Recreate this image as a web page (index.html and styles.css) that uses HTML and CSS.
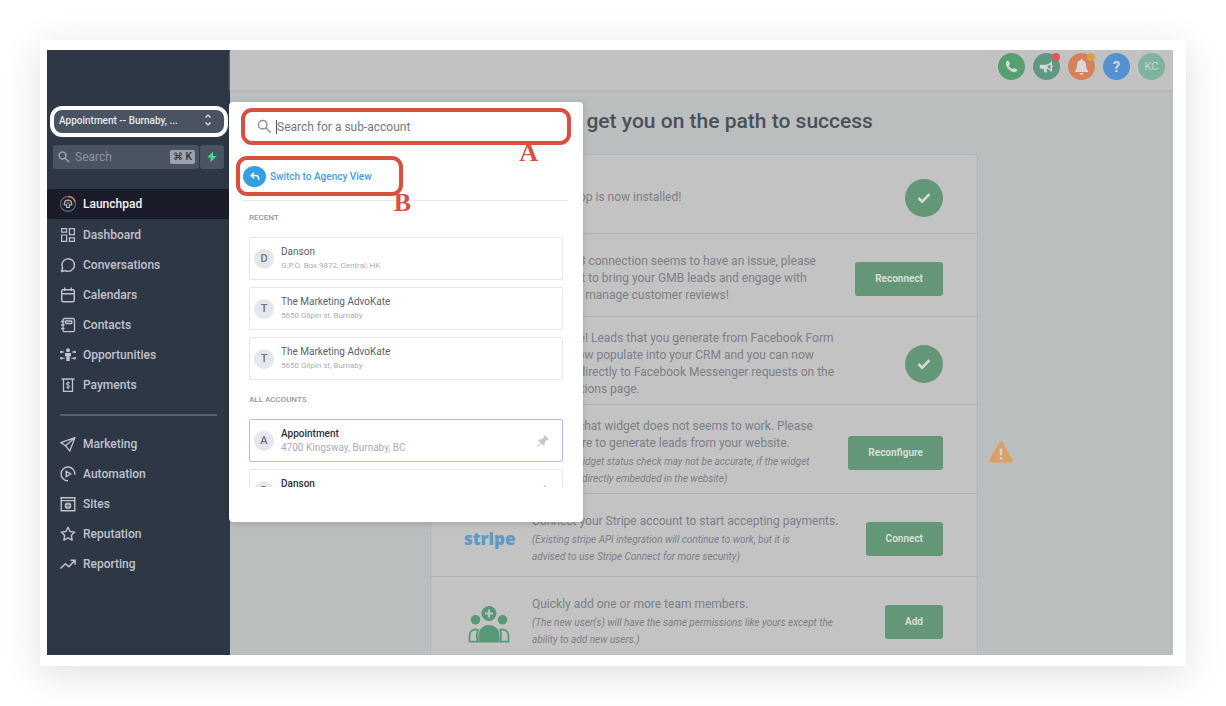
FILE: index.html
```html
<!DOCTYPE html>
<html lang="en">
<head>
  <meta charset="UTF-8" />
  <meta name="viewport" content="width=device-width, initial-scale=1" />
  <title>Launchpad</title>
  <link rel="stylesheet" href="styles.css">
</head>
<body>

<div class="frame">
  <div class="app">

    <aside class="sidebar">
      <button class="account-select" type="button">
        <span>Appointment -- Burnaby, ...</span>
        <svg width="8" height="14" viewBox="0 0 8 14" fill="none" stroke="currentColor" stroke-width="1.2"><path d="M1.5 4.5 4 2l2.500 2.500M1.500 9.500 4 12l2.500-2.500"/></svg>
      </button>

      <div class="quick-search">
        <label class="quick-field">
          <svg width="12" height="12" viewBox="0 0 12 12" fill="none" stroke="currentColor" stroke-width="1.500"><circle cx="4.500" cy="4.500" r="3.400"/><path d="m7.200 7.200 4 4"/></svg>
          <input type="text" placeholder="Search" aria-label="Search">
          <kbd>⌘ K</kbd>
        </label>
        <button class="zap" type="button" aria-label="Quick actions">
          <svg width="12" height="12" viewBox="0 0 12 12" fill="#3ddc97"><path d="M7 .8 1.200 6.600h3.500L4.300 11.200 10.800 5H7.200z"/></svg>
        </button>
      </div>

      <nav>
        <ul class="nav-list">
          <li><a class="active" href="#">
            <svg width="18" height="18" viewBox="0 0 18 18" fill="none"><circle cx="9" cy="9" r="7.500" stroke="#5b6070" stroke-width="1.300"/><path d="M9 1.500A7.500 7.500 0 0 1 16.200 7" stroke="#e2793f" stroke-width="1.500"/><path d="M7.600 9.800H5.200C5.200 6.800 6.800 5.200 9 5.200s3.800 1.600 3.800 4.600h-2.400v2.700H7.600z" stroke="#b9bdc8" stroke-width="1.200"/><path d="M7.500 8h3" stroke="#b9bdc8"/></svg>
            Launchpad</a></li>
          <li><a href="#">
            <svg width="18" height="18" viewBox="0 0 18 18" fill="none" stroke="currentColor" stroke-width="1.200"><path d="M2.600 2.600h5v3.600h-5zM10.400 2.600h5v6h-5zM2.600 9h5v6.400h-5zM10.400 11.800h5v3.600h-5z"/></svg>
            Dashboard</a></li>
          <li><a href="#">
            <svg width="18" height="18" viewBox="0 0 18 18" fill="none" stroke="currentColor" stroke-width="1.400"><path d="M2.500 15.500 3.600 12A6.300 6.300 0 1 1 6.200 14.600z" stroke-linejoin="round"/></svg>
            Conversations</a></li>
          <li><a href="#">
            <svg width="18" height="18" viewBox="0 0 18 18" fill="none" stroke="currentColor" stroke-width="1.400"><rect x="2.700" y="3.700" width="12.600" height="12" rx="1.500"/><path d="M2.700 7.700h12.600M5.700 1.500v3.500M12.300 1.500v3.500"/></svg>
            Calendars</a></li>
          <li><a href="#">
            <svg width="18" height="18" viewBox="0 0 18 18" fill="none" stroke="currentColor" stroke-width="1.300"><rect x="4" y="2.500" width="11.500" height="13.200" rx="1.500"/><rect x="6.600" y="5" width="6.300" height="2.500" rx=".5"/><path d="M2 5.500h3.500M2 9h3.500M2 12.500h3.500"/></svg>
            Contacts</a></li>
          <li><a href="#">
            <svg width="18" height="18" viewBox="0 0 18 18" fill="currentColor" stroke="none"><circle cx="9" cy="4.300" r="2"/><path d="M6 7h6v3.200h-1.300V15H7.300v-4.800H6z"/><circle cx="2.300" cy="6" r="1.300"/><circle cx="15.700" cy="6" r="1.300"/><circle cx="2.300" cy="12.200" r="1.300"/><circle cx="15.700" cy="12.200" r="1.300"/><path d="M3 5.500h2.200v1.100H3zM12.800 5.500H15v1.100h-2.200zM3 11.700h2.800v1.100H3zM12.200 11.700H15v1.100h-2.800z"/></svg>
            Opportunities</a></li>
          <li><a href="#">
            <svg width="18" height="18" viewBox="0 0 18 18" fill="none" stroke="currentColor" stroke-width="1.300"><path d="M2.500 3h13M4.500 3v12.300h9V3"/><path d="M10.800 7.200C10.500 6.500 7.400 6.200 7.400 7.900S10.700 8.800 10.700 10.600 7.600 12 7.200 11M9 5.500v7.500" stroke-width="1"/></svg>
            Payments</a></li>
        </ul>
        <hr>
        <ul class="nav-list">
          <li><a href="#">
            <svg width="18" height="18" viewBox="0 0 18 18" fill="none" stroke="currentColor" stroke-width="1.300" stroke-linejoin="round"><path d="M16 2.600 1.800 7.600l4.800 3.200L10.800 16zM16 2.600 6.600 10.800"/></svg>
            Marketing</a></li>
          <li><a href="#">
            <svg width="18" height="18" viewBox="0 0 18 18" fill="none" stroke="currentColor" stroke-width="1.400"><path d="M9 15.800A6.900 6.900 0 1 1 15.800 9.800M7.200 6.300v5.200L11.600 9z"/></svg>
            Automation</a></li>
          <li><a href="#">
            <svg width="18" height="18" viewBox="0 0 18 18" fill="none" stroke="currentColor" stroke-width="1.400"><path d="M2.200 2.700h13.600v13H2.200zM2.200 5.600h13.600"/><circle cx="9" cy="10.700" r="2.600" fill="currentColor"/><path d="M6.500 10.700h5M9 8.300v5" stroke="#2d3746" stroke-width=".6"/></svg>
            Sites</a></li>
          <li><a href="#">
            <svg width="18" height="18" viewBox="0 0 18 18" fill="none" stroke="currentColor" stroke-width="1.400" stroke-linejoin="round"><path d="m9 2.200 2 4.300 4.700.6-3.400 3.300.8 4.800L9 12.900l-4.100 2.300.8-4.800L2.300 7.100 7 6.500z"/></svg>
            Reputation</a></li>
          <li><a href="#">
            <svg width="18" height="18" viewBox="0 0 18 18" fill="none" stroke="currentColor" stroke-width="1.500"><path d="m1.500 13.500 4.800-4.800 3.500 3L15.800 5.500M11.500 5.200h4.600v4.500"/></svg>
            Reporting</a></li>
        </ul>
      </nav>
    </aside>

    <main class="main">
      <header class="topbar">
        <button class="round phone" type="button" aria-label="Phone">
          <svg width="13" height="13" viewBox="0 0 13 13" fill="currentColor"><path d="M3.300.8 5.100 4 3.900 5.400c.7 1.600 2 2.900 3.700 3.700L9 7.900l3.200 1.800c-.2 1.400-1 2.500-2.400 2.500C5.500 12.200.8 7.500.8 3.200.8 1.800 1.900 1 3.300.8z"/></svg>
        </button>
        <button class="round news" type="button" aria-label="News">
          <svg width="15" height="14" viewBox="0 0 15 14" fill="currentColor"><path fill-rule="evenodd" d="M1.500 4.700h5.300C9.500 4.500 11.300 3 12.300 1.500h.7v4c1 .3 1 2 0 2.300v4h-.7C11.300 10.300 9.500 9 7.300 8.700l.9 3.800H5.400L4.500 8.700h-3C.4 8.700.4 4.700 1.500 4.700zM8.700 5.800v2c1.100.2 2 .7 2.800 1.400V4.400c-.8.700-1.700 1.200-2.800 1.400z"/></svg>
          <span class="dot red"></span>
        </button>
        <button class="round bell" type="button" aria-label="Notifications">
          <svg width="15" height="16" viewBox="0 0 15 16" fill="currentColor"><path d="M7.500 0c.7 0 1 .5 1 1.200 2.200.5 3.500 2.200 3.500 4.600 0 3.200.7 4.700 2 6 .4.500.2 1.200-.5 1.200h-12c-.7 0-.9-.7-.5-1.200 1.300-1.300 2-2.800 2-6 0-2.400 1.300-4.100 3.500-4.600C6.500.5 6.800 0 7.500 0zM5.500 14h4c-.2 2.400-3.800 2.400-4 0z"/></svg>
          <span class="dot amber"></span>
        </button>
        <button class="round help" type="button" aria-label="Help">?</button>
        <button class="round user" type="button">KC</button>
      </header>

      <h1>Let's get you on the path to success</h1>

      <section class="steps">
        <article class="step first">
          <p>Mobile App is now installed!</p>
          <span class="done"><svg width="14" height="12" viewBox="0 0 14 12" fill="none" stroke="currentColor" stroke-width="2.500"><path d="m1.500 6 3.700 3.700 7.300-7.500"/></svg></span>
        </article>

        <article class="step">
          <p>Your GMB connection seems to have an issue, please<br>reconnect to bring your GMB leads and engage with<br>them and manage customer reviews!</p>
          <button class="btn" type="button">Reconnect</button>
        </article>

        <article class="step">
          <p>Awesome! Leads that you generate from Facebook Form<br>should now populate into your CRM and you can now<br>respond directly to Facebook Messenger requests on the<br>conversations page.</p>
          <span class="done"><svg width="14" height="12" viewBox="0 0 14 12" fill="none" stroke="currentColor" stroke-width="2.500"><path d="m1.500 6 3.700 3.700 7.300-7.500"/></svg></span>
        </article>

        <article class="step">
          <p>Website chat widget does not seems to work. Please<br>reconfigure to generate leads from your website.
            <em>(The chat widget status check may not be accurate, if the widget<br>code is not directly embedded in the website)</em></p>
          <button class="btn" type="button">Reconfigure</button>
          <svg class="warning" width="24" height="22" viewBox="0 0 24 22"><path d="M10.300 1.300c.8-1.300 2.600-1.300 3.400 0l9.800 17.300c.7 1.300-.2 2.900-1.700 2.900H2.200C.7 21.500-.2 19.900.5 18.600z" fill="#dba06a"/><path d="M12 7.500v7" stroke="#d6d0c8" stroke-width="2.400"/><circle cx="12" cy="17.300" r="1.400" fill="#d6d0c8"/></svg>
        </article>

        <article class="step">
          <span class="stripe">stripe</span>
          <p>Connect your Stripe account to start accepting payments.
            <em>(Existing stripe API integration will continue to work, but it is<br>advised to use Stripe Connect for more security)</em></p>
          <button class="btn" type="button">Connect</button>
        </article>

        <article class="step">
          <svg class="team" width="42" height="38" viewBox="0 0 42 38" fill="#579877"><circle cx="21" cy="8.500" r="7.500"/><path d="M21 4.500v8M17 8.500h8" stroke="#c3c3c3" stroke-width="2"/><circle cx="7.500" cy="14.800" r="4.800"/><circle cx="34.500" cy="14.800" r="4.800"/><path d="M10.500 37.500V31C10.500 24 15 20 21 20s10.500 4 10.500 11v6.500z"/><path d="M9.500 36.600H1.500V31c0-4 2.500-6.500 6-6.500 1 0 1.700.2 2.400.5C8.500 28.500 8.500 32 9.500 36.600zM32.500 36.600h8V31c0-4-2.500-6.500-6-6.500-1 0-1.700.2-2.400.5 1.400 3.500 1.400 7 .4 11.600z" fill="none" stroke="#579877" stroke-width="1.800"/></svg>
          <p>Quickly add one or more team members.
            <em>(The new user(s) will have the same permissions like yours except the<br>ability to add new users.)</em></p>
          <button class="btn" type="button">Add</button>
        </article>
      </section>
    </main>

    <!-- sub-account switcher -->
    <div class="switcher">
      <label class="account-search">
        <svg width="15" height="15" viewBox="0 0 15 15" fill="none" stroke="currentColor" stroke-width="1.500"><circle cx="5.700" cy="5.700" r="4.300"/><path d="m9 9 4.800 4.800"/></svg>
        <span class="caret"></span>
        <input type="text" placeholder="Search for a sub-account" aria-label="Search for a sub-account">
        <span class="mark">A</span>
      </label>

      <button class="agency" type="button">
        <span class="agency-icon"><svg width="10" height="9" viewBox="0 0 10 9" fill="none" stroke="currentColor" stroke-width="1.400"><path d="M4 .8 1.200 3.500 4 6.200M1.200 3.500H6c2 0 2.700 1.200 2.700 4.500"/></svg></span>
        Switch to Agency View
        <span class="mark">B</span>
      </button>

      <div class="accounts">
        <h2>RECENT</h2>
        <ul>
          <li class="account"><span class="avatar">D</span><div><h3>Danson</h3><p>G.P.O. Box 9872, Central, HK</p></div></li>
          <li class="account"><span class="avatar">T</span><div><h3>The Marketing AdvoKate</h3><p>5650 Gilpin st, Burnaby</p></div></li>
          <li class="account"><span class="avatar">T</span><div><h3>The Marketing AdvoKate</h3><p>5650 Gilpin st, Burnaby</p></div></li>
        </ul>
        <h2 class="all">ALL ACCOUNTS</h2>
        <ul>
          <li class="account full current"><span class="avatar">A</span><div><h3>Appointment</h3><p>4700 Kingsway, Burnaby, BC</p></div>
            <svg class="pin" width="14" height="14" viewBox="0 0 14 14" fill="currentColor"><path d="m8.500 1 4.500 4.500-1.200.8-1-.2-2 2.200-.2 2.700-1.100.8-2.200-2.300L1 13.200l-.4-.4L4.400 8.700 2.200 6.500 3 5.400l2.700-.2 2.200-2-.2-1z"/></svg></li>
          <li class="account full"><span class="avatar">D</span><div><h3>Danson</h3><p>G.P.O. Box 9872, Central, HK</p></div>
            <svg class="pin" width="14" height="14" viewBox="0 0 14 14" fill="currentColor"><path d="m8.500 1 4.500 4.500-1.200.8-1-.2-2 2.200-.2 2.700-1.100.8-2.200-2.300L1 13.200l-.4-.4L4.400 8.700 2.200 6.500 3 5.400l2.700-.2 2.200-2-.2-1z"/></svg></li>
        </ul>
      </div>
    </div>

  </div>
</div>

</body>
</html>
```
FILE: styles.css
```css
:root {
  --side: #2d3746;
  --side-field: #4a5362;
  --shade: #babebf;
  --shade-card: #c3c3c3;
  --green: #639777;
  --red: #d85140;
}
* {
  box-sizing: border-box;
}
body {
  margin: 0;
  padding: 40px;
  font-family: Roboto, "Liberation Sans", sans-serif;
  background: #fff;
}
h1, h2, h3, p, ul {
  margin: 0;
  padding: 0;
}
ul {
  list-style: none;
}
button, input {
  font-family: inherit;
  border: none;
}
input {
  width: 100%;
  min-width: 0;
  padding: 0;
  background: transparent;
  outline: none;
}
svg {
  flex: none;
}
.frame {
  padding: 10px 13px 11px 7px;
  background: #fff;
  box-shadow: 0 8px 36px rgba(0,0,0,0.13);
}
.app {
  position: relative;
  display: flex;
  height: calc(100vh - 101px);
  overflow: hidden;
}

/* sidebar */
.sidebar {
  width: 183px;
  flex: none;
  padding-top: 56px;
  background: var(--side);
}
.account-select {
  display: flex;
  align-items: center;
  justify-content: space-between;
  width: 178px;
  height: 31px;
  margin-left: 3px;
  padding: 0 12px 3px 5px;
  border: 4px solid #fff;
  border-radius: 12px;
  background: var(--side-field);
  color: #e6e8ec;
  font-size: 10px;
  font-weight: 500;
}
.quick-search {
  display: flex;
  gap: 1px;
  margin: 8px 6px 20px;
}
.quick-field {
  display: flex;
  align-items: center;
  gap: 5px;
  flex: 1;
  min-width: 0;
  height: 24px;
  padding: 0 4px 0 5px;
  border-radius: 3px;
  background: var(--side-field);
  color: #9aa1ad;
}
.quick-field input {
  flex: 1;
  color: #fff;
  font-size: 12px;
}
.quick-field input::placeholder {
  color: #8b92a0;
}
kbd {
  flex: none;
  width: 25px;
  border-radius: 2px;
  background: #9ca2ad;
  color: #252c38;
  font: 500 10px/14px Roboto, "DejaVu Sans", sans-serif;
  text-align: center;
  white-space: nowrap;
}
.zap {
  display: flex;
  align-items: center;
  justify-content: center;
  flex: none;
  width: 24px;
  padding: 0;
  border-radius: 3px;
  background: var(--side-field);
}
.nav-list a {
  display: flex;
  align-items: center;
  gap: 6px;
  height: 30px;
  padding-left: 12px;
  color: #c0c4cc;
  font-size: 12px;
  font-weight: 500;
  text-decoration: none;
}
.nav-list a.active {
  margin-bottom: 1px;
  border-radius: 3px;
  background: #1a1d29;
  color: #f3f4f6;
}
.sidebar hr {
  height: 2px;
  margin: 14px 13px 13px;
  border: none;
  background: #566071;
}

/* page behind the switcher */
.main {
  flex: 1;
  background: var(--shade);
}
.topbar {
  display: flex;
  justify-content: flex-end;
  gap: 8px;
  height: 40px;
  padding: 3px 8px 0 0;
  background: #c3c2c3;
  box-shadow: 0 1px 2px #b0b3b7;
}
.round {
  position: relative;
  display: flex;
  align-items: center;
  justify-content: center;
  width: 27px;
  height: 27px;
  padding: 0;
  border-radius: 50%;
  color: #d8d8d8;
}
.phone { background: #55a16e; }
.news { background: #5f9785; }
.bell { background: #d7815a; }
.help {
  background: #5590d0;
  font-size: 15px;
  font-weight: 700;
}
.user {
  background: #7fb39f;
  color: #c5d8d0;
  font-size: 11px;
}
.dot {
  position: absolute;
  top: 0;
  right: 0;
  width: 8px;
  height: 8px;
  border-radius: 50%;
}
.dot.red { background: #dd5a54; }
.dot.amber { background: #d8a049; }
h1 {
  padding-left: 8px;
  margin: 19px 0 21px;
  color: #4a5059;
  font-size: 21px;
  font-weight: 500;
  line-height: 24px;
  text-align: center;
}
.steps {
  margin: 0 195px 0 200px;
  border: 1px solid #b0b5bd;
  border-radius: 4px;
  background: var(--shade-card);
}
.step {
  position: relative;
  display: flex;
  align-items: center;
  min-height: 83px;
  padding: 13px 34px 6px 33px;
  border-bottom: 1px solid #adb0b8;
}
.step.first {
  min-height: 79px;
}
.step p {
  order: 1;
  margin-right: auto;
  color: #7b7f87;
  font-size: 12px;
  line-height: 17px;
  white-space: nowrap;
}
.step p:first-child {
  margin-left: 68px;
}
.step em {
  display: block;
  margin-top: 1px;
  font-size: 10px;
}
.step .btn, .step .done {
  order: 2;
}
.btn {
  height: 34px;
  padding: 0 20px;
  border-radius: 3px;
  background: var(--green);
  color: #d5dfd8;
  font-size: 10px;
  font-weight: 700;
}
.done {
  display: flex;
  align-items: center;
  justify-content: center;
  width: 38px;
  height: 38px;
  border-radius: 50%;
  background: var(--green);
  color: #d5dad7;
}
.stripe {
  width: 68px;
  color: #5f99c4;
  font: 800 17px/20px "Open Sans", sans-serif;
}
.team {
  margin: 4px 22px 0 4px;
}
.warning {
  position: absolute;
  top: 36px;
  right: -36px;
}

/* sub-account switcher */
.switcher {
  position: absolute;
  top: 52px;
  left: 182px;
  width: 354px;
  padding: 6px 12px 35px;
  border-radius: 4px;
  background: #fff;
  box-shadow: 0 2px 6px rgba(0,0,0,0.15);
}
.account-search {
  position: relative;
  display: flex;
  align-items: center;
  height: 37px;
  padding-left: 12px;
  border: 4px solid var(--red);
  border-radius: 11px;
  color: #8f939b;
}
.account-search input {
  flex: 1;
  color: #333;
  font-size: 12px;
}
.account-search input::placeholder {
  color: #747881;
}
.caret {
  width: 1px;
  height: 14px;
  margin-left: 4px;
  background: #555;
}
.mark {
  position: absolute;
  color: var(--red);
  font: 700 26px/24px "Liberation Serif", serif;
}
.account-search .mark {
  top: 29px;
  right: 29px;
}
.agency {
  position: relative;
  display: flex;
  align-items: center;
  gap: 4px;
  width: 167px;
  height: 40px;
  margin: 11px 0 4px -5px;
  padding: 0 0 0 3px;
  border: 4px solid var(--red);
  border-radius: 11px;
  background: #fff;
  color: #42a0dc;
  font-size: 10px;
  font-weight: 500;
}
.agency .mark {
  top: 31px;
  right: -12px;
}
.agency-icon {
  display: flex;
  align-items: center;
  justify-content: center;
  width: 23px;
  height: 21px;
  border-radius: 50%;
  background: #35a0df;
  color: #fff;
}
.accounts {
  height: 287px;
  margin-left: 1px;
  margin-right: 3px;
  padding: 11px 5px 0 7px;
  overflow: hidden;
  border-top: 1px solid #e6e7ea;
}
.accounts h2 {
  margin-bottom: 13px;
  color: #9397a1;
  font-size: 8px;
  font-weight: 500;
  line-height: 12px;
}
.accounts h2.all {
  margin-top: 14px;
}
.account {
  display: flex;
  align-items: center;
  gap: 7px;
  height: 43px;
  margin-bottom: 7px;
  padding: 0 12px 0 4px;
  border: 1px solid #e5e6ec;
  border-radius: 2px;
}
.account.current {
  border-color: #b5bbec;
}
.avatar {
  width: 20px;
  height: 20px;
  border-radius: 50%;
  background: #e6e6ed;
  color: #6e7280;
  font-size: 11px;
  font-weight: 500;
  line-height: 20px;
  text-align: center;
}
.account h3 {
  color: #5b5f69;
  font-size: 10px;
  font-weight: 400;
  line-height: 14px;
}
.account p {
  color: #a9adb5;
  font-size: 8px;
  line-height: 13px;
}
.account.full h3 {
  color: #2c2f36;
  font-weight: 500;
}
.account.full p {
  font-size: 10px;
}
.pin {
  margin-left: auto;
  color: #c6c8cc;
}
```
